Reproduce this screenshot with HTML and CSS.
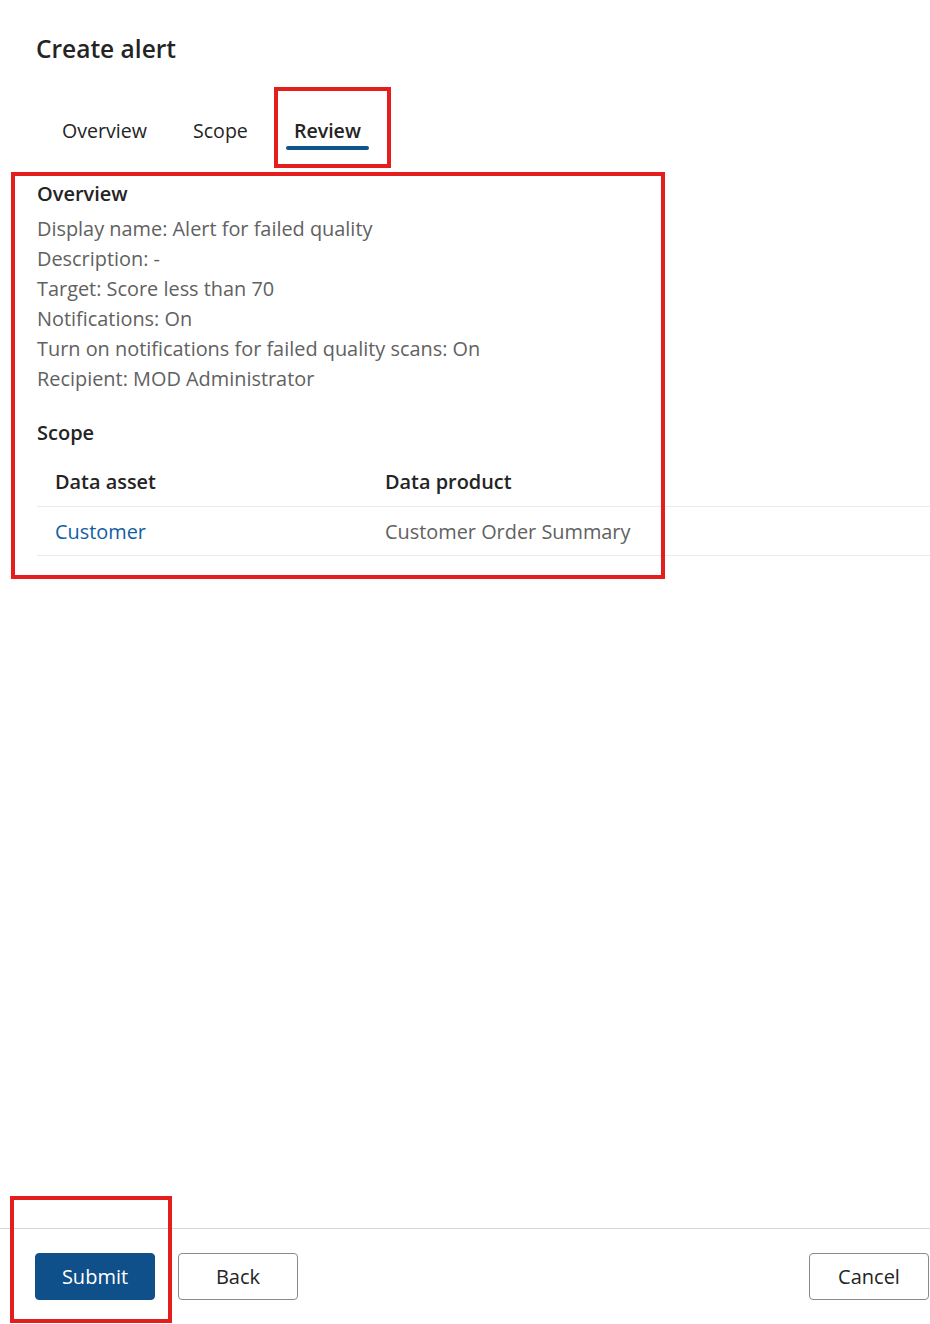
FILE: index.html
```html
<!DOCTYPE html>
<html lang="en">
<head>
<meta charset="utf-8">
<title>Create alert</title>
<link rel="stylesheet" href="styles.css">
</head>
<body>
<div class="page">
  <main class="content">
    <h1 class="title">Create alert</h1>
    <nav class="tabs">
      <span class="tab">Overview</span>
      <span class="tab">Scope</span>
      <span class="tab tab-active">Review</span>
    </nav>
    <section class="review">
      <h2 class="section-title">Overview</h2>
      <ul class="details">
        <li>Display name: Alert for failed quality</li>
        <li>Description: -</li>
        <li>Target: Score less than 70</li>
        <li>Notifications: On</li>
        <li>Turn on notifications for failed quality scans: On</li>
        <li>Recipient: MOD Administrator</li>
      </ul>
      <h2 class="section-title scope-title">Scope</h2>
      <div class="table">
        <div class="row head">
          <div class="cell c1">Data asset</div>
          <div class="cell c2">Data product</div>
        </div>
        <div class="row">
          <div class="cell c1"><a class="link" href="#">Customer</a></div>
          <div class="cell c2 muted">Customer Order Summary</div>
        </div>
      </div>
    </section>
  </main>
  <footer class="footer">
    <button class="btn primary">Submit</button>
    <button class="btn">Back</button>
    <button class="btn cancel">Cancel</button>
  </footer>
  <div class="mark mark-tab"></div>
  <div class="mark mark-review"></div>
  <div class="mark mark-submit"></div>
</div>
</body>
</html>
```
FILE: styles.css
```css
* { box-sizing: border-box; }
html, body { margin: 0; padding: 0; }
body {
  font-family: "Open Sans", "Noto Sans", "Liberation Sans", sans-serif;
  color: #242424;
  background: #fff;
}
.page {
  position: relative;
  min-height: 100vh;
  display: flex;
  flex-direction: column;
  overflow: hidden;
}
.content { flex: 1; }
.title {
  margin: 0;
  padding: 33px 0 0 36px;
  font-size: 24.5px;
  line-height: 32px;
  font-weight: 600;
}
.tabs {
  display: flex;
  gap: 30px;
  margin: 35px 0 0 54px;
  height: 50px;
}
.tab {
  position: relative;
  padding: 16px 8px 0;
  font-size: 19.6px;
  line-height: 30px;
  color: #242424;
}
.tab-active { font-weight: 600; }
.tab-active::after {
  content: "";
  position: absolute;
  left: 0;
  right: 0;
  top: 46px;
  height: 4px;
  border-radius: 2px;
  background: #0f548c;
}
.review { padding-left: 37px; margin-top: 29px; }
.section-title {
  margin: 0;
  font-size: 20px;
  line-height: 30px;
  font-weight: 600;
}
.details {
  list-style: none;
  margin: 5px 0 0;
  padding: 0;
  color: #616161;
  font-size: 19.9px;
  line-height: 30px;
}
.scope-title { margin-top: 24px; }
.table { margin-top: 8px; }
.row {
  display: flex;
  border-bottom: 1px solid #ebebeb;
  height: 49px;
  align-items: center;
  font-size: 19.9px;
  padding-top: 1px;
}
.row.head { font-weight: 600; height: 51px; padding-top: 0; }
.cell { padding: 0 18px; }
.c1 { width: 330px; }
.muted { color: #616161; }
.link { color: #115ea3; text-decoration: none; }
.footer {
  display: flex;
  gap: 23px;
  border-top: 1px solid #d6d6d6;
  padding: 24px 1px 24px 35px;
}
.btn {
  width: 120px;
  height: 47px;
  border: 1px solid #8a8a8a;
  border-radius: 4px;
  background: #fff;
  color: #242424;
  font-family: inherit;
  font-size: 20px;
  padding: 0;
}
.btn.primary {
  background: #0f4f8a;
  border-color: #0f4f8a;
  color: #fff;
}
.btn.cancel { margin-left: auto; }
.mark {
  position: absolute;
  border: 4px solid #e41d1d;
}
.mark-tab { left: 274px; top: 87px; width: 117px; height: 81px; }
.mark-review { left: 11px; top: 172px; width: 654px; height: 407px; }
.mark-submit { left: 10px; top: 1196px; width: 162px; height: 127px; }
```
